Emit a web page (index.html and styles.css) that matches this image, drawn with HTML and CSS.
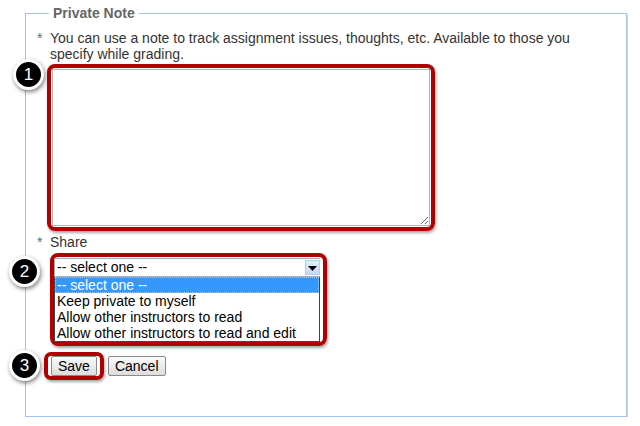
FILE: index.html
```html
<!DOCTYPE html>
<html>
<head>
<meta charset="utf-8">
<link rel="stylesheet" href="styles.css">
</head>
<body>
<fieldset class="note">
  <legend class="note-title">Private Note</legend>
  <div class="field">
    <span class="req">*</span>
    <p class="help">You can use a note to track assignment issues, thoughts, etc. Available to those you<br>specify while grading.</p>
  </div>
  <div class="ring ring-text">
    <span class="badge badge-1">1</span>
    <textarea class="note-input"></textarea>
  </div>
  <div class="field field-share">
    <span class="req">*</span>
    <span class="label">Share</span>
  </div>
  <div class="ring ring-select">
    <span class="badge badge-2">2</span>
    <div class="select">
      <span class="select-value">-- select one --</span>
      <span class="select-arrow"><svg width="9" height="6" viewBox="0 0 9 6"><path d="M0 1h9L4.5 6z" fill="#000"/></svg></span>
    </div>
    <ul class="options">
      <li class="opt opt-active">-- select one --</li>
      <li class="opt">Keep private to myself</li>
      <li class="opt">Allow other instructors to read</li>
      <li class="opt">Allow other instructors to read and edit</li>
    </ul>
  </div>
  <div class="actions">
    <div class="ring ring-btn">
      <span class="badge badge-3">3</span>
      <button class="btn">Save</button>
    </div>
    <button class="btn">Cancel</button>
  </div>
</fieldset>
</body>
</html>
```
FILE: styles.css
```css
html, body {
  margin: 0;
  padding: 0;
  background: #fff;
}
body {
  font-family: "Liberation Sans", Arial, sans-serif;
  font-size: 14px;
  color: #333;
}
.note {
  box-sizing: border-box;
  width: 602px;
  margin: 5px 0 0 25px;
  padding: 0 0 36px 11px;
  border: 1px solid #a3c3ea;
  box-shadow: 1px 1px 0 #c8dbf3;
  min-width: 0;
}
.note-title {
  margin-left: 12px;
  padding: 0 4px;
  font-weight: bold;
  color: #666;
  font-size: 14px;
  line-height: 16px;
}
.field {
  display: flex;
  margin-top: 9px;
  line-height: 16px;
}
.req {
  width: 13px;
  color: #5a6b80;
  flex: none;
}
.help {
  margin: 0;
  white-space: nowrap;
}
.ring {
  position: relative;
  border: 4px solid #b00000;
  border-radius: 8px;
  padding: 1px;
  box-shadow: 1px 2px 3px rgba(0,0,0,0.35);
}
.ring-text {
  width: 378px;
  margin: 2px 0 0 10px;
}
.note-input {
  display: block;
  box-sizing: border-box;
  width: 378px;
  height: 157px;
  margin: 0;
  border: 1px solid #b5b5b5;
  resize: both;
  font: inherit;
}
.field-share {
  margin-top: 3px;
}
.label {
  color: #333;
}
.ring-select {
  width: 266px;
  margin: 3px 0 0 13px;
  padding: 1px 3px 0 0;
  color: #000;
}
.select {
  display: flex;
  align-items: center;
  height: 17px;
  border: 1px solid #a5acb5;
  border-right: 0;
  background: #fff;
}
.select-value {
  flex: 1;
  padding-left: 2px;
  line-height: 15px;
}
.select-arrow {
  display: flex;
  align-items: center;
  justify-content: center;
  width: 15px;
  height: 15px;
  box-sizing: border-box;
  border: 1px solid #b9cdea;
  background: linear-gradient(#e3eefc, #c4d8f4);
}
.options {
  list-style: none;
  margin: 0;
  padding: 0;
  border: 1px solid #444;
  border-top: 0;
  background: #fff;
}
.opt {
  height: 16px;
  line-height: 16px;
  padding-left: 2px;
  white-space: nowrap;
}
.opt-active {
  background: #3399ff;
  color: #fff;
  outline: 1px dotted #9cc9f7;
  outline-offset: -1px;
}
.actions {
  display: flex;
  align-items: center;
  margin: 6px 0 0 7px;
}
.ring-btn {
  padding: 0 3px;
  border-radius: 7px;
}
.btn {
  display: block;
  box-sizing: border-box;
  height: 20px;
  margin: 0;
  padding: 0 6px;
  border: 1px solid #8a8a8a;
  border-radius: 2px;
  background: linear-gradient(#fafafa, #dcdcdc);
  font-family: "Liberation Sans", Arial, sans-serif;
  font-size: 14px;
  line-height: 16px;
  color: #000;
}
.ring-btn + .btn {
  margin-left: 4px;
}
.badge {
  position: absolute;
  box-sizing: border-box;
  width: 31px;
  height: 31px;
  border: 3px solid #fff;
  border-radius: 50%;
  background: #000;
  color: #fff;
  font-family: "Liberation Sans", Arial, sans-serif;
  font-size: 17px;
  line-height: 25px;
  text-align: center;
  box-shadow: 1px 2px 4px rgba(0,0,0,0.5);
}
.badge-1 { left: -38px; top: -9px; }
.badge-2 { left: -45px; top: -1px; }
.badge-3 { left: -39px; top: -6px; }
```
